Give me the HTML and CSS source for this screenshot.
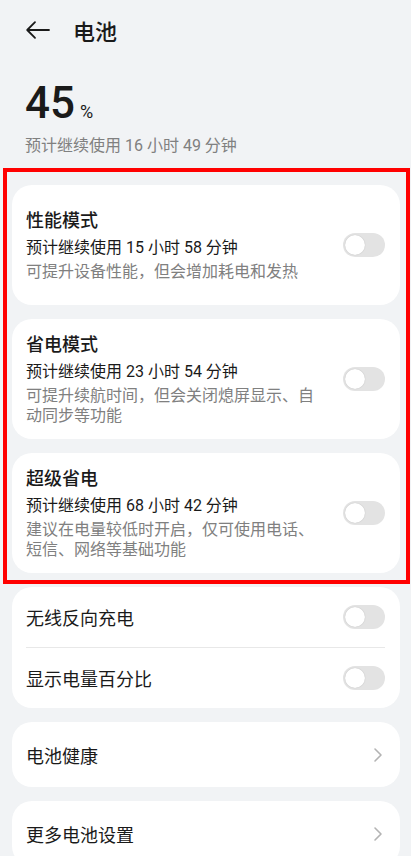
FILE: index.html
```html
<!DOCTYPE html>
<html>
<head>
    <meta charset="utf-8">
    <title>电池</title>
    <link rel="stylesheet" href="styles.css">
</head>
<body>
    <div class="header">
        <svg class="back" width="26" height="20" viewBox="0 0 26 20">
            <path d="M24 10H2.5 M10 2.2L2.2 10 10 17.8" fill="none" stroke="#1a1a1a" stroke-width="1.8" stroke-linecap="round" stroke-linejoin="round"/>
        </svg>
        <span class="title">电池</span>
    </div>

    <div class="summary">
        <div class="level"><span class="num">45</span><span class="pct">%</span></div>
        <div class="remain">预计继续使用 16 小时 49 分钟</div>
    </div>

    <div class="modes">
        <div class="card mode">
            <div class="text">
                <div class="name">性能模式</div>
                <div class="time">预计继续使用 15 小时 58 分钟</div>
                <div class="desc">可提升设备性能，但会增加耗电和发热</div>
            </div>
            <div class="switch"><span class="knob"></span></div>
        </div>
        <div class="card mode">
            <div class="text">
                <div class="name">省电模式</div>
                <div class="time">预计继续使用 23 小时 54 分钟</div>
                <div class="desc">可提升续航时间，但会关闭熄屏显示、自动同步等功能</div>
            </div>
            <div class="switch"><span class="knob"></span></div>
        </div>
        <div class="card mode">
            <div class="text">
                <div class="name">超级省电</div>
                <div class="time">预计继续使用 68 小时 42 分钟</div>
                <div class="desc">建议在电量较低时开启，仅可使用电话、短信、网络等基础功能</div>
            </div>
            <div class="switch"><span class="knob"></span></div>
        </div>
        <div class="mark"></div>
    </div>

    <div class="card list">
        <div class="row">
            <span class="label">无线反向充电</span>
            <div class="switch"><span class="knob"></span></div>
        </div>
        <div class="row">
            <span class="label">显示电量百分比</span>
            <div class="switch"><span class="knob"></span></div>
        </div>
    </div>

    <div class="card list">
        <div class="row link">
            <span class="label">电池健康</span>
            <svg class="chev" width="10" height="16" viewBox="0 0 10 16"><path d="M2 2l6 6-6 6" fill="none" stroke="#b3b3b3" stroke-width="1.6" stroke-linecap="round" stroke-linejoin="round"/></svg>
        </div>
    </div>

    <div class="card list">
        <div class="row link">
            <span class="label">更多电池设置</span>
            <svg class="chev" width="10" height="16" viewBox="0 0 10 16"><path d="M2 2l6 6-6 6" fill="none" stroke="#b3b3b3" stroke-width="1.6" stroke-linecap="round" stroke-linejoin="round"/></svg>
        </div>
    </div>
</body>
</html>
```

FILE: styles.css
```css
body {
    margin: 0;
    padding: 0 11px 0 12px;
    background: #f1f3f5;
    font-family: Roboto, "Noto Sans CJK SC", sans-serif;
    color: #1a1a1a;
    overflow: hidden;
    height: 856px;
}
.header {
    display: flex;
    align-items: center;
    height: 60px;
    padding-left: 13px;
}
.back {
    display: block;
}
.title {
    margin-left: 22px;
    font-size: 22px;
    font-weight: 500;
}
.summary {
    padding: 20px 0 0 13px;
    margin-bottom: 28px;
}
.level {
    display: flex;
    align-items: baseline;
    height: 46px;
}
.num {
    font-size: 44px;
    font-weight: 500;
    line-height: 46px;
}
.pct {
    font-size: 18px;
    margin-left: 5px;
}
.remain {
    margin-top: 9px;
    font-size: 16px;
    line-height: 22px;
    color: #808080;
}
.card {
    background: #fff;
    border-radius: 20px;
    margin-bottom: 14px;
}
.modes {
    position: relative;
}
.mode {
    display: flex;
    align-items: center;
    min-height: 120px;
    box-sizing: border-box;
    padding: 12px 15px 12px 14px;
    gap: 18px;
}
.text {
    flex: 1;
}
.name {
    font-size: 18px;
    font-weight: 500;
    line-height: 26px;
}
.time {
    font-size: 16px;
    line-height: 24px;
    margin-top: 2px;
}
.desc {
    font-size: 16px;
    line-height: 20px;
    margin-top: 2px;
    color: #808080;
}
.switch {
    width: 42px;
    height: 24px;
    border-radius: 12px;
    background: #e3e3e3;
    flex-shrink: 0;
    box-sizing: border-box;
    padding: 2px;
}
.knob {
    display: block;
    width: 20px;
    height: 20px;
    border-radius: 50%;
    background: #fff;
    box-shadow: 0 0 1px rgba(0, 0, 0, 0.25);
}
.mark {
    position: absolute;
    left: -9px;
    right: -10px;
    top: -17px;
    bottom: -11px;
    border: 4px solid #ff0000;
    pointer-events: none;
}
.list {
    padding: 0 15px 0 14px;
}
.row {
    display: flex;
    align-items: center;
    justify-content: space-between;
    height: 60px;
}
.row + .row {
    border-top: 1px solid #e8e8e8;
}
.row.link {
    height: 65px;
    padding-right: 2px;
}
.label {
    font-size: 18px;
}
.chev {
    display: block;
}
```
